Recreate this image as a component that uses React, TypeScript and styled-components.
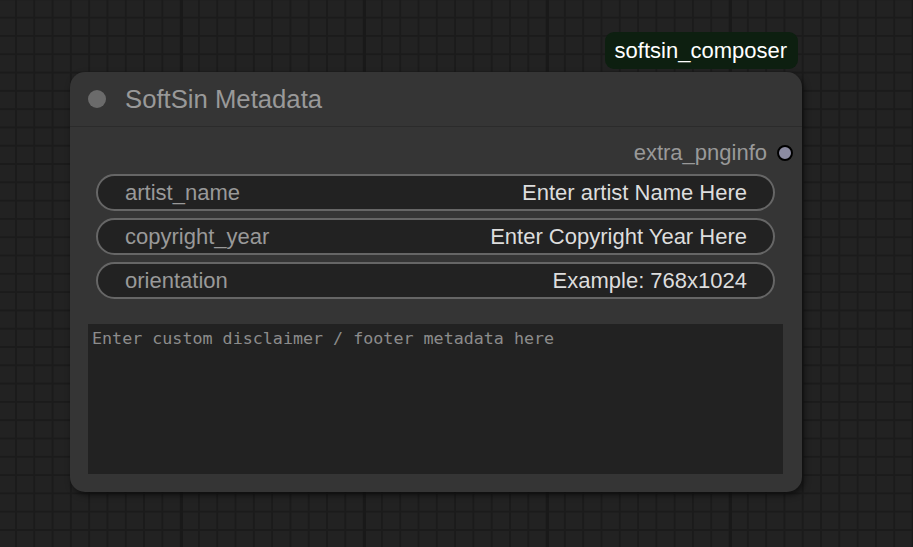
import React from "react";
import styled, { createGlobalStyle } from "styled-components";

const GlobalStyle = createGlobalStyle`
  html, body {
    margin: 0;
    padding: 0;
    background: #222222;
    overflow: hidden;
  }
  body {
    font-family: "Liberation Sans", Arial, sans-serif;
  }
`;

const Canvas = styled.div`
  position: relative;
  width: 913px;
  height: 547px;
  overflow: hidden;
  background-color: #222222;
  background-image:
    linear-gradient(90deg, #191919 3px, transparent 3px),
    linear-gradient(90deg, #1b1b1b 2px, transparent 2px),
    linear-gradient(180deg, #1b1b1b 2px, transparent 2px);
  background-size: 183px 100%, 18.3px 100%, 100% 18.3px;
  background-position: 180px 0, 15px 0, 0 16.7px;
`;

const Node = styled.div`
  position: absolute;
  left: ${(p: { $x: number; $y: number }) => p.$x}px;
  top: ${(p) => p.$y}px;
  width: 732px;
  height: 420px;
  box-sizing: border-box;
  background: #353535;
  border-radius: 15px;
  box-shadow: 2px 3px 6px rgba(0, 0, 0, 0.55);
  display: flex;
  flex-direction: column;
`;

const Badge = styled.div`
  position: absolute;
  top: -40px;
  right: 4px;
  height: 37px;
  padding: 0 11px 0 10px;
  box-sizing: border-box;
  display: flex;
  align-items: center;
  background: #0d1f10;
  border-radius: 9px;
  color: #ffffff;
  font-size: 22px;
  line-height: 1;
`;

const TitleBar = styled.div`
  height: 55px;
  flex: 0 0 55px;
  display: flex;
  align-items: center;
  gap: 19px;
  padding-left: 18px;
  border-bottom: 1px solid #2b2b2b;
  box-sizing: border-box;
`;

const TitleDot = styled.span`
  width: 18px;
  height: 18px;
  border-radius: 50%;
  background: #6b6b6b;
`;

const TitleText = styled.span`
  color: #999999;
  font-size: 25.7px;
  line-height: 1;
  padding-top: 1px;
`;

const Body = styled.div`
  display: flex;
  flex-direction: column;
  padding: 0 19px 18px 18px;
  flex: 1;
`;

const OutputRow = styled.div`
  height: 36px;
  margin-top: 8px;
  margin-bottom: 3px;
  display: flex;
  align-items: center;
  justify-content: flex-end;
  gap: 10px;
  margin-right: -10px;
`;

const SlotLabel = styled.span`
  color: #999999;
  font-size: 22px;
  line-height: 1;
`;

const SlotDot = styled.span`
  width: 12px;
  height: 12px;
  border-radius: 50%;
  background: #8b8ba1;
  border: 2px solid #000000;
`;

const WidgetList = styled.div`
  display: flex;
  flex-direction: column;
  gap: 7px;
  margin: 0 8px 0 8px;
`;

const Widget = styled.div`
  height: 37px;
  box-sizing: border-box;
  border: 2px solid #666666;
  border-radius: 19px;
  background: #222222;
  display: flex;
  align-items: center;
  justify-content: space-between;
  padding: 0 26px 0 27px;
  font-size: 22px;
  line-height: 1;
`;

const WidgetLabel = styled.span`
  color: #999999;
`;

const WidgetValue = styled.span`
  color: #dddddd;
`;

const TextArea = styled.textarea`
  margin-top: 25px;
  height: 150px;
  box-sizing: border-box;
  width: 100%;
  resize: none;
  border: none;
  outline: none;
  background: #222222;
  padding: 4px 4px;
  font-family: "DejaVu Sans Mono", "Liberation Mono", monospace;
  font-size: 16.7px;
  line-height: 1.25;
  color: #cccccc;
  &::placeholder {
    color: #8c8c8c;
    opacity: 1;
  }
`;

const widgets = [
  { label: "artist_name", value: "Enter artist Name Here" },
  { label: "copyright_year", value: "Enter Copyright Year Here" },
  { label: "orientation", value: "Example: 768x1024" },
];

export default function App() {
  return (
    <>
      <GlobalStyle />
      <Canvas>
        <Node $x={70} $y={72}>
          <Badge>softsin_composer</Badge>
          <TitleBar>
            <TitleDot />
            <TitleText>SoftSin Metadata</TitleText>
          </TitleBar>
          <Body>
            <OutputRow>
              <SlotLabel>extra_pnginfo</SlotLabel>
              <SlotDot />
            </OutputRow>
            <WidgetList>
              {widgets.map((w) => (
                <Widget key={w.label}>
                  <WidgetLabel>{w.label}</WidgetLabel>
                  <WidgetValue>{w.value}</WidgetValue>
                </Widget>
              ))}
            </WidgetList>
            <TextArea
              readOnly
              placeholder="Enter custom disclaimer / footer metadata here"
            />
          </Body>
        </Node>
      </Canvas>
    </>
  );
}
